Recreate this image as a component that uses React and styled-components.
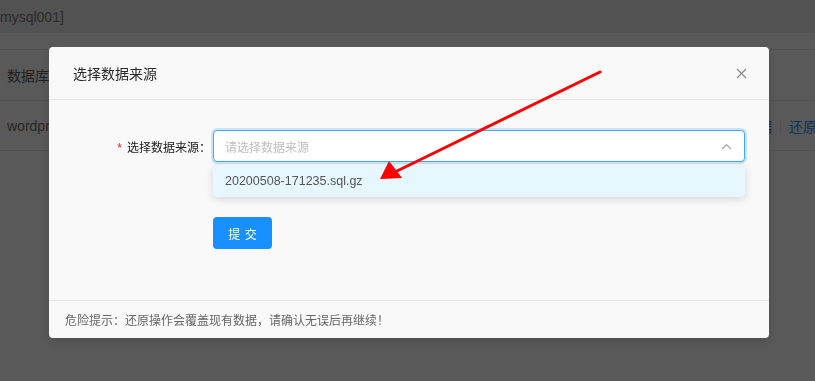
import React from "react";
import styled, { createGlobalStyle } from "styled-components";

const Global = createGlobalStyle`
  html, body { margin: 0; padding: 0; }
  body {
    width: 815px;
    height: 381px;
    overflow: hidden;
    background: #fff;
    font-family: "Liberation Sans", "Noto Sans CJK SC", sans-serif;
    color: #333;
  }
`;

const Page = styled.div`
  width: 815px;
  height: 381px;
  overflow: hidden;
  background: #fff;
`;

const TopBand = styled.div`
  height: 33px;
  background: #eaeaea;
  display: flex;
  align-items: center;
  font-size: 14px;
  color: #7a7a7a;
`;

const Table = styled.div`
  margin-top: 16px;
  border-top: 1px solid #e8e8e8;
`;

const Row = styled.div`
  display: grid;
  grid-template-columns: 716px 99px;
  align-items: center;
  height: ${(p) => p.$h}px;
  border-bottom: 1px solid #e8e8e8;
  font-size: 14px;
  color: ${(p) => (p.$head ? "#5e5e5e" : "#747474")};
  white-space: nowrap;
`;

const Cell = styled.div`
  padding-left: 7px;
`;

const Actions = styled.div`
  display: flex;
  align-items: center;
  gap: 8px;
  overflow: hidden;
  color: #1890ff;
`;

const Divider = styled.span`
  flex: none;
  width: 1px;
  height: 14px;
  background: #e8e8e8;
`;

const Mask = styled.div`
  position: fixed;
  inset: 0;
  background: rgba(0, 0, 0, 0.65);
`;

const ModalWrap = styled.div`
  position: fixed;
  inset: 0;
  padding: 47px 0 0 49px;
`;

const Modal = styled.div`
  width: 720px;
  background: #f9f9f9;
  border-radius: 4px;
  box-shadow: 0 4px 12px rgba(0, 0, 0, 0.15);
  display: flex;
  flex-direction: column;
`;

const Header = styled.div`
  height: 52px;
  padding: 0 24px;
  display: flex;
  align-items: center;
  justify-content: space-between;
  border-bottom: 1px solid #e6e6e6;
  font-family: "Noto Sans CJK SC", sans-serif;
  font-size: 14px;
  color: #2b2b2b;
`;

const Close = styled.button`
  width: 16px;
  height: 16px;
  margin-right: -4px;
  padding: 0;
  border: none;
  background: none;
  display: flex;
  align-items: center;
  justify-content: center;
`;

const Body = styled.div`
  padding: 30px 24px 51px;
  display: flex;
  flex-direction: column;
  gap: 55px;
`;

const FormRow = styled.div`
  display: flex;
  align-items: center;
`;

const Label = styled.label`
  width: 140px;
  padding-right: 2px;
  box-sizing: border-box;
  text-align: right;
  font-family: "Noto Sans CJK SC", sans-serif;
  font-size: 12px;
  color: #222;
`;

const Required = styled.span`
  color: #f5222d;
  margin-right: 5px;
  font-family: "Liberation Sans", sans-serif;
`;

const SelectBox = styled.div`
  position: relative;
  flex: 1;
`;

const Input = styled.div`
  height: 32px;
  box-sizing: border-box;
  border: 1px solid #40a9ff;
  border-radius: 4px;
  background: #fff;
  box-shadow: 0 0 0 2px rgba(24, 144, 255, 0.2);
  display: flex;
  align-items: center;
  justify-content: space-between;
  padding: 0 12px 0 11px;
  font-family: "Noto Sans CJK SC", sans-serif;
  font-size: 12px;
  color: #bfbfbf;
`;

const Dropdown = styled.div`
  position: absolute;
  left: 0;
  right: 0;
  top: 35px;
  height: 32px;
  border-radius: 4px;
  background: #e6f7ff;
  box-shadow: 0 2px 8px rgba(0, 0, 0, 0.15);
  display: flex;
  align-items: center;
  padding: 0 12px;
  font-family: "Liberation Sans", sans-serif;
  font-size: 12.5px;
  color: #555;
`;

const ButtonRow = styled.div`
  padding-left: 140px;
`;

const Button = styled.button`
  width: 59px;
  height: 32px;
  border: none;
  border-radius: 4px;
  background: #1890ff;
  color: #fff;
  font-family: "Noto Sans CJK SC", sans-serif;
  font-size: 12px;
  letter-spacing: 1px;
  padding: 0 0 0 1px;
`;

const Footer = styled.div`
  border-top: 1px solid #e6e6e6;
  padding: 0 16px;
  height: 37px;
  display: flex;
  align-items: center;
  font-family: "Noto Sans CJK SC", sans-serif;
  font-size: 12px;
  color: #666;
`;

const ArrowLayer = styled.svg`
  position: fixed;
  left: 0;
  top: 0;
  pointer-events: none;
`;

export default function App() {
  return (
    <>
      <Global />
      <Page>
        <TopBand>mysql001]</TopBand>
        <Table>
          <Row $h={50} $head>
            <Cell>数据库名</Cell>
            <Actions>操作</Actions>
          </Row>
          <Row $h={49}>
            <Cell>wordpress</Cell>
            <Actions>
              <span>备份数据</span>
              <Divider />
              <span>还原数据</span>
            </Actions>
          </Row>
        </Table>
      </Page>
      <Mask />
      <ModalWrap>
        <Modal>
          <Header>
            <span>选择数据来源</span>
            <Close aria-label="close">
              <svg width="11" height="11" viewBox="0 0 11 11">
                <path d="M1 1 L10 10 M10 1 L1 10" stroke="#8a8a8a" strokeWidth="1.2" fill="none" />
              </svg>
            </Close>
          </Header>
          <Body>
            <FormRow>
              <Label>
                <Required>*</Required>选择数据来源：
              </Label>
              <SelectBox>
                <Input>
                  <span>请选择数据来源</span>
                  <svg width="11" height="7" viewBox="0 0 11 7">
                    <path d="M1 6 L5.5 1.5 L10 6" stroke="#a6a6a6" strokeWidth="1.2" fill="none" />
                  </svg>
                </Input>
                <Dropdown>20200508-171235.sql.gz</Dropdown>
              </SelectBox>
            </FormRow>
            <ButtonRow>
              <Button>提 交</Button>
            </ButtonRow>
          </Body>
          <Footer>危险提示：还原操作会覆盖现有数据，请确认无误后再继续！</Footer>
        </Modal>
      </ModalWrap>
      <ArrowLayer width="815" height="381" viewBox="0 0 815 381">
        <line x1="600" y1="72" x2="395" y2="172" stroke="#ff0000" strokeWidth="3" strokeLinecap="round" />
        <polygon points="380,179 389,161 396,170 402,178" fill="#ff0000" />
      </ArrowLayer>
    </>
  );
}
